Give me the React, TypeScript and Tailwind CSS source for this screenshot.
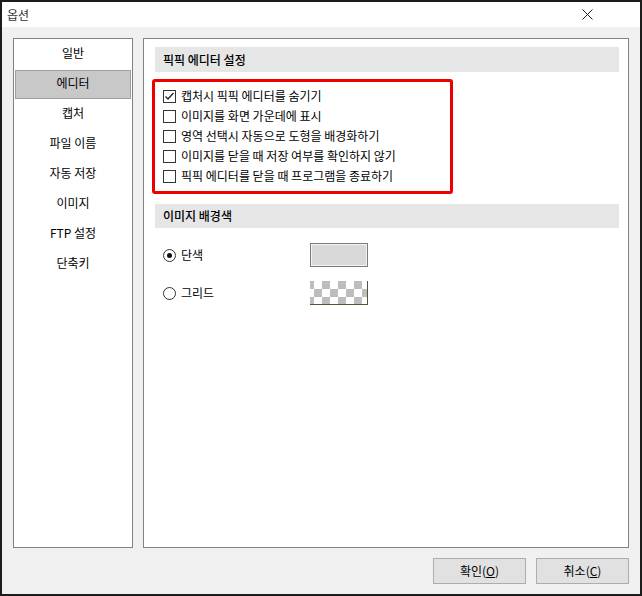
import React from 'react';

const MENU = ['일반', '에디터', '캡처', '파일 이름', '자동 저장', '이미지', 'FTP 설정', '단축키'];

const EDITOR_OPTIONS = [
  { label: '캡처시 픽픽 에디터를 숨기기', checked: true },
  { label: '이미지를 화면 가운데에 표시', checked: false },
  { label: '영역 선택시 자동으로 도형을 배경화하기', checked: false },
  { label: '이미지를 닫을 때 저장 여부를 확인하지 않기', checked: false },
  { label: '픽픽 에디터를 닫을 때 프로그램을 종료하기', checked: false },
];

const font = { fontFamily: '"Noto Sans CJK KR", "Noto Sans", sans-serif' };

const Checkbox: React.FC<{ checked: boolean }> = ({ checked }) => (
  <span className="w-[13px] h-[13px] border border-[#333333] bg-white flex items-center justify-center shrink-0">
    {checked && (
      <svg width="11" height="11" viewBox="0 0 11 11">
        <polyline points="1.5,5.5 4,8 9.5,2" fill="none" stroke="#222" strokeWidth="1.3" />
      </svg>
    )}
  </span>
);

const Radio: React.FC<{ checked: boolean }> = ({ checked }) => (
  <span className="w-[13px] h-[13px] rounded-full border border-[#333333] bg-white flex items-center justify-center shrink-0">
    {checked && <span className="w-[5px] h-[5px] rounded-full bg-[#111]" />}
  </span>
);

const Checker: React.FC = () => (
  <svg width="58" height="24" viewBox="0 0 58 24" className="block">
    {[0, 1, 2].map((row) =>
      [0, 1, 2, 3, 4].map((col) => (
        <rect
          key={`${row}-${col}`}
          x={(row % 2 === 0 ? -4 : 4) + col * 16}
          y={row * 8}
          width="8"
          height="8"
          fill="#bdbdbd"
        />
      ))
    )}
    <line x1="57.5" y1="0" x2="57.5" y2="24" stroke="#55553a" />
    <line x1="0" y1="23.5" x2="58" y2="23.5" stroke="#55553a" />
  </svg>
);

const App: React.FC = () => {
  return (
    <div style={font} className="w-[642px] h-[596px] border-2 border-[#1c1c1c] bg-[#f0f0f0] flex flex-col text-[12px] text-black">
      <div className="h-[25px] bg-white flex items-center justify-between pl-[5px] pr-[47px]">
        <span className="text-[#333333] text-[12px]">옵션</span>
        <svg width="11" height="11" viewBox="0 0 11 11">
          <path d="M0.5 0.5 L10.5 10.5 M10.5 0.5 L0.5 10.5" stroke="#222" strokeWidth="1" />
        </svg>
      </div>

      <div className="flex-1 pl-[11px] pr-[11px] pt-[11px] flex flex-col">
        <div className="flex gap-[10px] h-[510px]">
          <div className="w-[120px] border border-[#828282] bg-white pt-px">
            {MENU.map((item, i) => (
              <div key={item} className="h-[30px] px-px">
                <div
                  className={
                    i === 1
                      ? 'h-[29px] bg-[#c8c8c8] border border-[#a0a0a0] flex items-center justify-center'
                      : 'h-[29px] flex items-center justify-center'
                  }
                >
                  <span className="-mt-[3px]">{item}</span>
                </div>
              </div>
            ))}
          </div>

          <div className="flex-1 border border-[#828282] bg-white">
            <div className="mt-[8px] ml-[11px] mr-[9px] h-[25px] bg-[#e6e6e6] flex items-center pl-[8px] font-medium">
              픽픽 에디터 설정
            </div>

            <div className="mt-[7px] ml-[8px] w-[301px] border-[3px] border-[#ee0000] rounded-[3px] pl-[8px] pt-[4px] pb-[5px]">
              {EDITOR_OPTIONS.map((opt) => (
                <div key={opt.label} className="h-[20px] flex items-center gap-[5px]">
                  <Checkbox checked={opt.checked} />
                  <span className="leading-none -mt-px">{opt.label}</span>
                </div>
              ))}
            </div>

            <div className="mt-[10px] ml-[11px] mr-[9px] h-[24px] bg-[#e6e6e6] flex items-center pl-[8px] font-medium">
              이미지 배경색
            </div>

            <div className="mt-[15px] pl-[19px] flex flex-col gap-[14px]">
              <div className="flex items-center h-[24px]">
                <div className="w-[147px] flex items-center gap-[5px]">
                  <Radio checked />
                  <span className="-mt-px">단색</span>
                </div>
                <div className="w-[58px] h-[24px] border border-[#7a7a7a] bg-[#f4f4f4] p-px">
                  <div className="w-full h-full bg-[#d9d9d9]" />
                </div>
              </div>
              <div className="flex items-center h-[24px]">
                <div className="w-[147px] flex items-center gap-[5px]">
                  <Radio checked={false} />
                  <span className="-mt-px">그리드</span>
                </div>
                <Checker />
              </div>
            </div>
          </div>
        </div>

        <div className="mt-[10px] flex justify-end gap-[10px]">
          <button className="w-[93px] h-[26px] bg-[#e1e1e1] border border-[#adadad] flex items-center justify-center">
            <span>확인(<span className="underline">O</span>)</span>
          </button>
          <button className="w-[93px] h-[26px] bg-[#e1e1e1] border border-[#adadad] flex items-center justify-center">
            <span>취소(<span className="underline">C</span>)</span>
          </button>
        </div>
      </div>
    </div>
  );
};

export default App;
